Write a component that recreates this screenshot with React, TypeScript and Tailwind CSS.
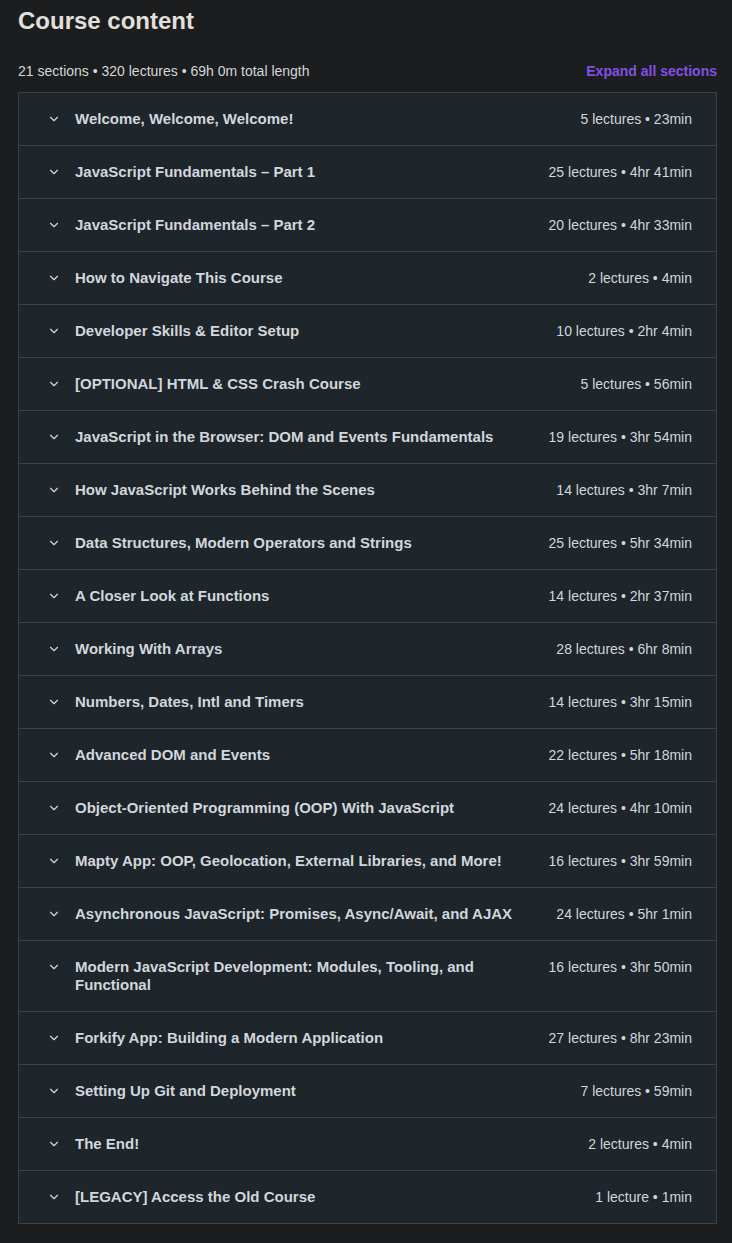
import { ChevronDown } from "lucide-react";

const sections = [
  { title: "Welcome, Welcome, Welcome!", meta: "5 lectures • 23min" },
  { title: "JavaScript Fundamentals – Part 1", meta: "25 lectures • 4hr 41min" },
  { title: "JavaScript Fundamentals – Part 2", meta: "20 lectures • 4hr 33min" },
  { title: "How to Navigate This Course", meta: "2 lectures • 4min" },
  { title: "Developer Skills & Editor Setup", meta: "10 lectures • 2hr 4min" },
  { title: "[OPTIONAL] HTML & CSS Crash Course", meta: "5 lectures • 56min" },
  { title: "JavaScript in the Browser: DOM and Events Fundamentals", meta: "19 lectures • 3hr 54min" },
  { title: "How JavaScript Works Behind the Scenes", meta: "14 lectures • 3hr 7min" },
  { title: "Data Structures, Modern Operators and Strings", meta: "25 lectures • 5hr 34min" },
  { title: "A Closer Look at Functions", meta: "14 lectures • 2hr 37min" },
  { title: "Working With Arrays", meta: "28 lectures • 6hr 8min" },
  { title: "Numbers, Dates, Intl and Timers", meta: "14 lectures • 3hr 15min" },
  { title: "Advanced DOM and Events", meta: "22 lectures • 5hr 18min" },
  { title: "Object-Oriented Programming (OOP) With JavaScript", meta: "24 lectures • 4hr 10min" },
  { title: "Mapty App: OOP, Geolocation, External Libraries, and More!", meta: "16 lectures • 3hr 59min" },
  { title: "Asynchronous JavaScript: Promises, Async/Await, and AJAX", meta: "24 lectures • 5hr 1min" },
  { title: "Modern JavaScript Development: Modules, Tooling, and Functional", meta: "16 lectures • 3hr 50min" },
  { title: "Forkify App: Building a Modern Application", meta: "27 lectures • 8hr 23min" },
  { title: "Setting Up Git and Deployment", meta: "7 lectures • 59min" },
  { title: "The End!", meta: "2 lectures • 4min" },
  { title: "[LEGACY] Access the Old Course", meta: "1 lecture • 1min" },
];

const App = () => {
  return (
    <div
      className="min-h-[1243px] bg-[#1c1d1f] pl-[18px] pr-[15px] pt-[5px] pb-5 text-[#d1d7dc]"
      style={{ fontFamily: '"Liberation Sans", Arial, sans-serif' }}
    >
      <h2 className="text-[24px] font-bold leading-[32px] text-[#e2e0dc]">
        Course content
      </h2>

      <div className="mt-[25px] mb-[12px] flex items-center justify-between text-[14px] leading-[18px]">
        <span>21 sections • 320 lectures • 69h 0m total length</span>
        <button className="font-bold text-[#8150e6]">Expand all sections</button>
      </div>

      {/* Sections */}
      <div className="border border-[#3e4143]">
        {sections.map((s, i) => (
          <div
            key={i}
            className={`flex items-start justify-between gap-8 bg-[#1e252b] pl-[28px] pr-[24px] py-[17px] ${
              i > 0 ? "border-t border-[#3e4143]" : ""
            }`}
          >
            <div className="flex items-start gap-[14px]">
              <ChevronDown
                size={14}
                strokeWidth={2}
                className="mt-[2px] shrink-0 text-[#d1d7dc]"
              />
              <span className="text-[15px] font-bold leading-[18px] text-[#d1d7dc]">
                {s.title}
              </span>
            </div>
            <span className="shrink-0 whitespace-nowrap text-[14px] leading-[18px]">
              {s.meta}
            </span>
          </div>
        ))}
      </div>
    </div>
  );
};

export default App;
